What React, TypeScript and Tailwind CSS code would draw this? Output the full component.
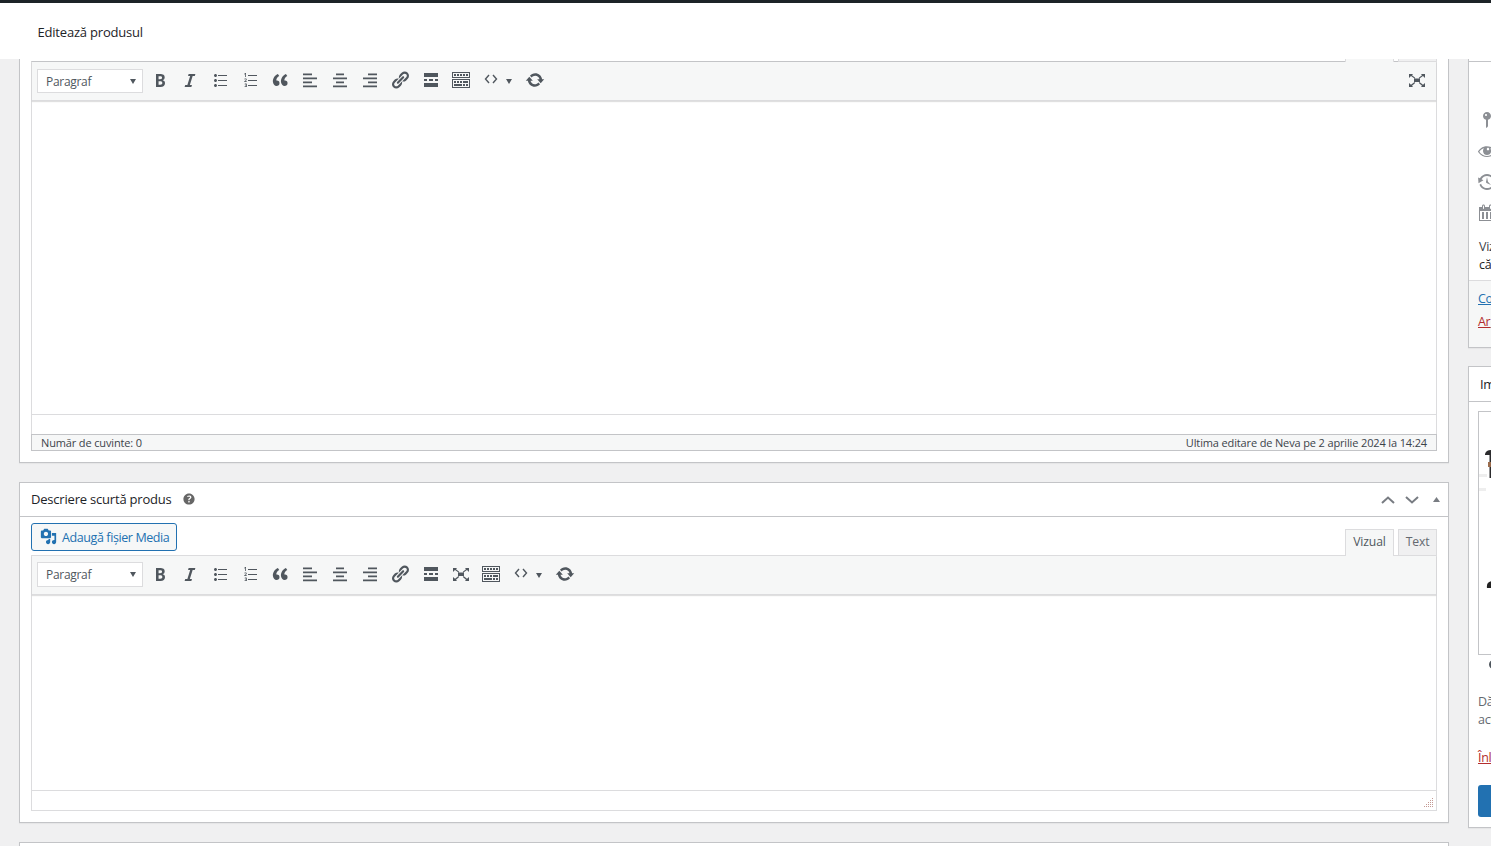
import { clsx } from "clsx";
import type { ReactNode } from "react";

const icons = {
  bold: "M6 4v13h4.54c1.37 0 2.46-.33 3.26-1 .8-.66 1.2-1.58 1.2-2.77 0-.84-.17-1.51-.51-2.01s-.9-.85-1.67-1.03v-.09c.57-.1 1.02-.4 1.36-.9s.51-1.13.51-1.91c0-1.14-.39-1.98-1.17-2.5C12.75 4.26 11.5 4 9.78 4H6zm2.57 5.15V6.26h1.36c.73 0 1.27.11 1.61.32.34.22.51.58.51 1.07 0 .54-.16.92-.47 1.15s-.82.35-1.51.35h-1.5zm0 2.19h1.6c1.44 0 2.16.53 2.16 1.61 0 .6-.17 1.05-.51 1.34s-.86.43-1.57.43H8.57v-3.38z",
  italic: "M14.78 6h-2.13l-2.8 9h2.12l-.62 2H4.6l.62-2h2.14l2.8-9H8.03l.62-2h6.75z",
  ul: "M5.5 7C4.67 7 4 6.33 4 5.5 4 4.68 4.67 4 5.5 4 6.32 4 7 4.68 7 5.5 7 6.33 6.32 7 5.5 7zM8 5h9v1H8V5zm-2.5 7c-.83 0-1.5-.67-1.5-1.5C4 9.68 4.67 9 5.5 9c.82 0 1.5.68 1.5 1.5 0 .83-.68 1.5-1.5 1.5zM8 10h9v1H8v-1zm-2.5 7c-.83 0-1.5-.67-1.5-1.5 0-.82.67-1.5 1.5-1.5.82 0 1.5.68 1.5 1.5 0 .83-.68 1.5-1.5 1.5zM8 15h9v1H8v-1z",
  ol: "M6 7V3h-.69L4.02 4.02l.4.51.78-.6V7H6zm2-2h9v1H8V5zM6.8 12v-.7H5.4l.6-.55c.5-.45.75-.7.75-1.2 0-.65-.5-1-1.2-1-.5 0-.9.15-1.3.5l.4.5c.3-.25.5-.35.8-.35s.45.15.45.45c0 .3-.1.45-.6.9L4.2 11.4v.6h2.6zM8 10h9v1H8v-1zm-1.6 5.1c.4-.15.6-.4.6-.75 0-.55-.5-.85-1.2-.85-.5 0-.9.15-1.25.4l.35.5c.3-.2.5-.25.8-.25s.5.1.5.35c0 .3-.25.35-.7.35h-.3v.6h.3c.6 0 .8.1.8.4s-.2.4-.7.4c-.3 0-.7-.1-1-.25v.7c.3.1.65.2 1.1.2.9 0 1.4-.4 1.4-1 0-.45-.25-.7-.7-.8zM8 15h9v1H8v-1z",
  quote: "M9.49 13.22c0-.74-.2-1.38-.61-1.9-.62-.78-1.83-.88-2.53-.72-.29-1.65 1.11-3.75 2.92-4.65L7.88 4c-2.73 1.3-5.42 4.28-4.96 8.05C3.21 14.43 4.59 16 6.54 16c.85 0 1.56-.25 2.12-.75s.83-1.18.83-2.03zm8.05 0c0-.74-.2-1.38-.61-1.9-.63-.78-1.83-.88-2.53-.72-.29-1.65 1.11-3.75 2.92-4.65L15.93 4c-2.73 1.3-5.41 4.28-4.95 8.05.29 2.38 1.66 3.95 3.61 3.95.85 0 1.56-.25 2.12-.75s.83-1.18.83-2.03z",
  left: "M12 5.300V3.500H3v1.800h9zm5 4V7.500H3v1.800h14zm-5 4v-1.800H3v1.800h9zm5 4v-1.800H3v1.800h14z",
  center: "M14 5.300V3.500H6v1.800h8zm3 4V7.500H3v1.800h14zm-3 4v-1.800H6v1.800h8zm3 4v-1.800H3v1.800h14z",
  right: "M17 5.300V3.500H8v1.800h9zm0 4V7.500H3v1.800h14zm0 4v-1.800H8v1.800h9zm0 4v-1.800H3v1.800h14z",
  link: "M17.74 2.76c1.68 1.69 1.68 4.41 0 6.1l-1.53 1.52c-1.12 1.12-2.7 1.47-4.14 1.09l2.62-2.61.76-.77.76-.76c.84-.84.84-2.2 0-3.04-.84-.85-2.2-.85-3.04 0l-.77.76-3.38 3.38c-.37-1.44-.02-3.02 1.1-4.14l1.52-1.53c1.69-1.68 4.42-1.68 6.1 0zM8.59 13.43l5.34-5.34c.42-.42.42-1.1 0-1.52-.44-.43-1.13-.39-1.53 0l-5.33 5.34c-.42.42-.42 1.1 0 1.52.44.43 1.13.39 1.52 0zm-.76 2.29l4.14-4.15c.38 1.44.03 3.02-1.09 4.14l-1.52 1.53c-1.69 1.68-4.41 1.68-6.1 0-1.68-1.68-1.68-4.42 0-6.1l1.53-1.52c1.12-1.12 2.7-1.47 4.14-1.1l-4.14 4.15c-.85.84-.85 2.2 0 3.05.84.84 2.2.84 3.04 0z",
  more: "M17 7V3H3v4h14zM6 11V9H3v2h3zm6 0V9H8v2h4zm5 0V9h-3v2h3zm0 6v-4H3v4h14z",
  kitchen: "M19 2v6H1V2h18zm-1 5V3H2v4h16zM5 4v2H3V4h2zm3 0v2H6V4h2zm3 0v2H9V4h2zm3 0v2h-2V4h2zm3 0v2h-2V4h2zm2 5v9H1V9h18zm-1 8v-7H2v7h16zM5 11v2H3v-2h2zm3 0v2H6v-2h2zm3 0v2H9v-2h2zm6 0v2h-5v-2h5zm-6 3v2H3v-2h8zm3 0v2h-2v-2h2zm3 0v2h-2v-2h2z",
  expand: "M7 8.500h6v3.500H7zM2 4h4L5 5.200 8.200 7.700 7.500 8.500 4 6 2 8zM18 4h-4l1 1.200-3.200 2.500.7.8L16 6l2 2zM2 17h4l-1-1.200 3.200-2.900-.7-.8L4 14.800 2 13zM18 17h-4l1-1.200-3.200-2.900.7-.8 3.500 2.700 2-1.800z",
  update: "M10.2 3.28c3.53 0 6.43 2.61 6.92 6h2.08l-3.5 4-3.5-4h2.32c-.45-1.97-2.21-3.45-4.32-3.45-1.45 0-2.73.71-3.54 1.78L4.95 5.66C6.23 4.2 8.11 3.28 10.2 3.28zm-.4 13.44c-3.52 0-6.43-2.61-6.92-6H.8l3.5-4c1.17 1.33 2.33 2.67 3.5 4H5.48c.45 1.97 2.21 3.45 4.32 3.45 1.45 0 2.73-.71 3.54-1.78l1.71 1.95c-1.28 1.46-3.15 2.38-5.25 2.38z",
  media: "M13 11V4c0-.55-.45-1-1-1h-1.670L9 1H5L3.670 3H2c-.55 0-1 .45-1 1v7c0 .55.45 1 1 1h10c.55 0 1-.45 1-1zM7 4.500c1.380 0 2.500 1.120 2.500 2.500S8.380 9.500 7 9.500 4.500 8.380 4.500 7 5.620 4.500 7 4.500zM14 6h5v10.500c0 1.380-1.120 2.500-2.500 2.500S14 17.880 14 16.500s1.120-2.500 2.500-2.500c.17 0 .34.02.5.05V9h-3V6zm-4 8.050V13h2v3.500c0 1.380-1.120 2.500-2.500 2.500S7 17.880 7 16.500 8.120 14 9.500 14c.17 0 .34.02.5.05z",
  help: "M17 10c0-3.87-3.14-7-7-7-3.87 0-7 3.13-7 7s3.13 7 7 7c3.86 0 7-3.13 7-7zm-6.3 1.48H9.14v-.43c0-.38.08-.7.24-.98s.46-.57.88-.89c.41-.29.68-.53.81-.71.14-.18.2-.39.2-.62 0-.25-.09-.44-.28-.58-.19-.13-.45-.19-.79-.19-.58 0-1.25.19-2 .57l-.64-1.28c.87-.49 1.8-.74 2.77-.74.81 0 1.45.2 1.92.58.48.39.71.91.71 1.55 0 .43-.09.8-.29 1.11-.19.32-.57.67-1.11 1.06-.38.28-.61.49-.71.63-.1.15-.15.34-.15.57v.35zm-1.47 2.74c-.18-.17-.27-.42-.27-.73 0-.33.08-.58.26-.75s.43-.25.77-.25c.32 0 .57.09.75.26s.27.42.27.74c0 .3-.09.55-.27.72-.18.18-.43.27-.75.27-.33 0-.58-.09-.76-.26z",
  pin: "M14 6c0 1.860-1.280 3.410-3 3.860V16c0 1-2 2-2 2V9.860c-1.720-.45-3-2-3-3.860 0-2.210 1.790-4 4-4s4 1.790 4 4zM8 5c0 .55.45 1 1 1s1-.45 1-1-.45-1-1-1-1 .45-1 1z",
  eye: "M18.300 9.500C15 4.900 8.500 3.800 3.900 7.200 2.700 8.100 1.700 9.300.9 10.600c.2.4.5.8.8 1.100 3.400 4.600 9.900 5.600 14.500 2.200.8-.6 1.600-1.400 2.200-2.200.3-.4.6-.8.8-1.100-.3-.4-.6-.8-.9-1.100zM10.100 7.200c.5-.5 1.300-.5 1.800 0s.5 1.300 0 1.800-1.300.5-1.800 0-.5-1.300 0-1.800zM10 14.900c-3.100 0-6-1.600-7.700-4.200C3.500 9 5.100 7.800 7 7.200c-.7.8-1 1.700-1 2.700 0 2.200 1.700 4.100 4 4.100s4.100-1.700 4.100-4v-.1c0-1-.4-2-1.100-2.700 1.900.6 3.500 1.800 4.700 3.500-1.700 2.600-4.600 4.200-7.700 4.200z",
  backup: "M13.65 2.88c3.93 2.01 5.48 6.84 3.47 10.77s-6.83 5.48-10.77 3.47c-1.87-.96-3.2-2.56-3.86-4.4l1.64-1.03c.45 1.57 1.52 2.95 3.08 3.76 3.01 1.54 6.69.35 8.23-2.66 1.55-3.01.36-6.69-2.65-8.24C9.78 3.01 6.1 4.2 4.56 7.21l1.88.97-4.95 3.08-.39-5.82 1.78.91C4.9 2.4 9.75.89 13.65 2.88zm-4.36 7.83C9.11 10.53 9 10.28 9 10c0-.07.03-.12.04-.19h-.01L10 5l.97 4.81L14 13l-4.5-2.12.02-.02c-.08-.04-.16-.09-.23-.15z",
  calendar: "M15 4h3v14H2V4h3V3c0-.83.67-1.500 1.500-1.500S8 2.170 8 3v1h4V3c0-.83.67-1.500 1.500-1.500S15 2.170 15 3v1zM6 3v2.500c0 .28.22.5.5.5s.5-.22.5-.5V3c0-.28-.22-.5-.5-.5S6 2.720 6 3zm7 0v2.500c0 .28.22.5.5.5s.5-.22.5-.5V3c0-.28-.22-.5-.5-.5s-.5.22-.5.5zm4 14V8H3v9h14zM7 16V9H5v7h2zm4 0V9H9v7h2zm4 0V9h-2v7h2z",
};

type IconName = keyof typeof icons;

function Icon({ name, className = "size-5" }: { name: IconName; className?: string }) {
  return (
    <svg viewBox="0 0 20 20" className={clsx("shrink-0", className)} fill="currentColor" fillRule="evenodd">
      <path d={icons[name]} />
    </svg>
  );
}

function Tool({ name }: { name: IconName }) {
  return (
    <button className="flex w-[30.1px] shrink-0 justify-center">
      <Icon name={name} />
    </button>
  );
}

function Caret({ className = "w-1.5" }: { className?: string }) {
  return (
    <svg viewBox="0 0 6 5" preserveAspectRatio="none" className={clsx("h-[5px] shrink-0", className)} fill="currentColor">
      <path d="M0 0h6L3 5z" />
    </svg>
  );
}

const baseTools: IconName[] = ["bold", "italic", "ul", "ol", "quote", "left", "center", "right", "link", "more"];

function Toolbar({ tools, fullscreen }: { tools: IconName[]; fullscreen?: boolean }) {
  return (
    <div className="flex h-[39px] shrink-0 items-start border-b border-[#dcdcde] bg-[#f6f7f7] pr-[9px] pl-[5px] text-[#50575e] shadow-[0_1px_1px_#0000001f]">
      <div
        className={clsx(
          "flex w-[106px] items-center border border-[#dcdcde] bg-white pr-[6px] pl-2",
          fullscreen ? "mt-[7px] h-6" : "mt-1.5 h-[25px]",
        )}
      >
        <span className="flex-1 pt-px text-[12px] tracking-[-0.3px]">Paragraf</span>
        <Caret />
      </div>
      <div className="mt-2 ml-[1.7px] flex flex-1 items-center">
        {baseTools.concat(tools).map((name) => (
          <Tool key={name} name={name} />
        ))}
        <button className="flex w-11 shrink-0 items-center pl-2">
          <svg viewBox="0 0 14 10" className="mb-0.5 h-2.5 w-3.5" fill="none" stroke="currentColor" strokeWidth="1.4">
            <path d="M5 1 1.500 5 5 9M9 1l3.500 4L9 9" />
          </svg>
          <Caret className="mt-0.5 ml-2 w-1.5" />
        </button>
        <Tool name="update" />
        {fullscreen && (
          <button className="ml-auto">
            <Icon name="expand" />
          </button>
        )}
      </div>
    </div>
  );
}

function Tabs({ className, labels = ["", ""] }: { className?: string; labels?: string[] }) {
  return (
    <div className={clsx("relative -mb-px flex items-end justify-end gap-1 overflow-hidden text-[12.200px] tracking-[-0.15px]", className)}>
      <div className="flex h-[27px] w-[49px] shrink-0 items-center justify-center border border-b-0 border-[#dcdcde] bg-[#f6f7f7] pb-px text-[#50575e]">
        {labels[0]}
      </div>
      <div className="flex h-[27px] w-[39px] shrink-0 items-center justify-center border border-[#dcdcde] bg-[#f0f0f1] text-[#646970]">
        {labels[1]}
      </div>
    </div>
  );
}

function Panel({ className, children }: { className?: string; children?: ReactNode }) {
  return (
    <section className={clsx("flex shrink-0 flex-col border border-[#c3c4c7] bg-white shadow-[0_1px_1px_#0000000a]", className)}>
      {children}
    </section>
  );
}

function ShortDescription() {
  return (
    <Panel className="mt-[19px] h-[341px]">
      <header className="flex h-[34px] shrink-0 items-center border-b border-[#c3c4c7] pr-2 pl-[11px]">
        <h2 className="w-[141px] text-[13px] font-medium tracking-[-0.2px] whitespace-nowrap text-[#1d2327]">Descriere scurtă produs</h2>
        <Icon name="help" className="mb-px ml-[9px] size-4 text-[#666]" />
        <div className="ml-auto flex items-center text-[#787c82]">
          <svg viewBox="0 0 14 8" className="h-2 w-3.5" fill="none" stroke="currentColor" strokeWidth="2">
            <path d="M1 7 7 1.500 13 7" />
          </svg>
          <svg viewBox="0 0 14 8" className="ml-2.5 h-2 w-3.5" fill="none" stroke="currentColor" strokeWidth="2">
            <path d="M1 1l6 5.500L13 1" />
          </svg>
          <Caret className="mb-px ml-3.5 w-[7px] rotate-180" />
        </div>
      </header>
      <div className="flex flex-1 flex-col px-[11px] pt-1.5 pb-[11px]">
        <div className="flex h-[33px] items-start justify-between">
          <button className="flex h-7 w-[146px] items-center rounded-[3px] border border-[#2271b1] bg-[#f6f7f7] pl-2 text-[12.500px] tracking-[-0.4px] whitespace-nowrap text-[#2271b1]">
            <Icon name="media" className="mr-[5px] mb-px size-[17px]" />
            <span className="pt-0.5">Adaugă fișier Media</span>
          </button>
          <Tabs className="mt-1.5 h-[27px]" labels={["Vizual", "Text"]} />
        </div>
        <div className="-mt-px flex flex-1 flex-col border border-[#dcdcde]">
          <Toolbar tools={["expand", "kitchen"]} />
          <div className="flex-1" />
          <div className="flex h-5 items-end justify-end border-t border-[#dcdcde] p-0.5">
            <svg viewBox="0 0 10 10" className="size-2.5" fill="#c49a94">
              <path d="M8 0h1v1H8zM8 2h1v1H8zM6 2h1v1H6zM8 4h1v1H8zM6 4h1v1H6zM4 4h1v1H4zM8 6h1v1H8zM6 6h1v1H6zM4 6h1v1H4zM2 6h1v1H2zM8 8h1v1H8zM6 8h1v1H6zM4 8h1v1H4zM2 8h1v1H2zM0 8h1v1H0z" />
            </svg>
          </div>
        </div>
      </div>
    </Panel>
  );
}

function Sidebar() {
  return (
    <aside className="ml-[19px] flex w-[280px] shrink-0 flex-col text-[12.500px] leading-[18px] tracking-[-0.3px] text-[#3c434a]">
      <Panel className="h-[289px] border-t-0">
        <div className="h-[3px] border-b border-[#c3c4c7]" />
        <div className="flex h-[160px] flex-col gap-[11px] pt-12 pl-2 text-[#8c8f94]">
          <Icon name="pin" />
          <Icon name="eye" />
          <Icon name="backup" />
          <Icon name="calendar" />
        </div>
        <div className="mt-[16px] flex-1 pl-2.5">
          <p>Viz</p>
          <p className="text-[#1d2327]">că</p>
        </div>
        <div className="flex h-[67px] flex-col gap-[5px] border-t border-[#dcdcde] bg-[#f6f7f7] pt-[9px] pl-[9px] underline">
          <a className="text-[#2271b1]">Co</a>
          <a className="text-[#b32d2e]">Ar</a>
        </div>
      </Panel>
      <Panel className="mt-[18px] h-[462px]">
        <h2 className="flex h-[35px] shrink-0 items-center border-b border-[#c3c4c7] pl-[11px] text-[13px] font-medium text-[#1d2327]">Im</h2>
        <div className="mt-[9px] ml-[9px] h-[244px] shrink-0 border border-[#c3c4c7]">
          <svg viewBox="0 0 20 242" className="h-[242px] w-5">
            <path d="M0 62h8v3H0zM0 76h7v3H0z" fill="#eee" />
            <path d="M6 42q1-4 6-4v28h-1.500V43H6z" fill="#2c2c2e" />
            <path d="M9 50h3v5H9z" fill="#9a6b4c" />
            <path d="M8 176q-1-6 5-7v7z" fill="#222" />
          </svg>
        </div>
        <div className="mt-[5px] ml-5 size-[9px] shrink-0 rounded-full border-[3px] border-[#50575e]" />
        <div className="mt-6 pl-[9px] text-[#646970]">
          <p>Dă</p>
          <p>act</p>
        </div>
        <a className="mt-5 pl-[9px] text-[#b32d2e] underline">Înl</a>
        <div className="mt-[18px] ml-[9px] h-8 shrink-0 rounded-l-[3px] bg-[#2271b1]" />
      </Panel>
    </aside>
  );
}

export default function App() {
  return (
    <div className="flex h-[846px] w-full flex-col overflow-hidden bg-[#f0f0f1] font-['Open_Sans','Noto_Sans',sans-serif] text-[13px]">
      <header className="flex h-[59px] shrink-0 items-center border-t-[3px] border-[#1d2327] bg-white pt-[3px] pl-[37.500px]">
        <h1 className="text-[13px] font-medium tracking-[-0.2px] text-[#1d2327]">Editează produsul</h1>
      </header>
      <div className="flex min-h-0 flex-1 overflow-hidden pl-[19px]">
        <main className="flex w-[1430px] shrink-0 flex-col">
          <Panel className="h-[404px] border-t-0 px-[11px] pb-[11px]">
            <Tabs className="h-[3px]" />
            <div className="flex flex-1 flex-col border border-b-0 border-[#dcdcde] border-t-[#c3c4c7]">
              <Toolbar tools={["kitchen"]} fullscreen />
              <div className="flex-1" />
              <div className="h-5 border-t border-[#dcdcde]" />
            </div>
            <div className="flex h-[17px] shrink-0 items-center justify-between border border-[#c3c4c7] bg-[#f6f7f7] px-[9px] pt-0.5 text-[11px] tracking-[-0.14px] text-[#3c434a]">
              <span>Număr de cuvinte: 0</span>
              <span>Ultima editare de Neva pe 2 aprilie 2024 la 14:24</span>
            </div>
          </Panel>
          <ShortDescription />
          <Panel className="mt-[19px] h-10" />
        </main>
        <Sidebar />
      </div>
    </div>
  );
}
